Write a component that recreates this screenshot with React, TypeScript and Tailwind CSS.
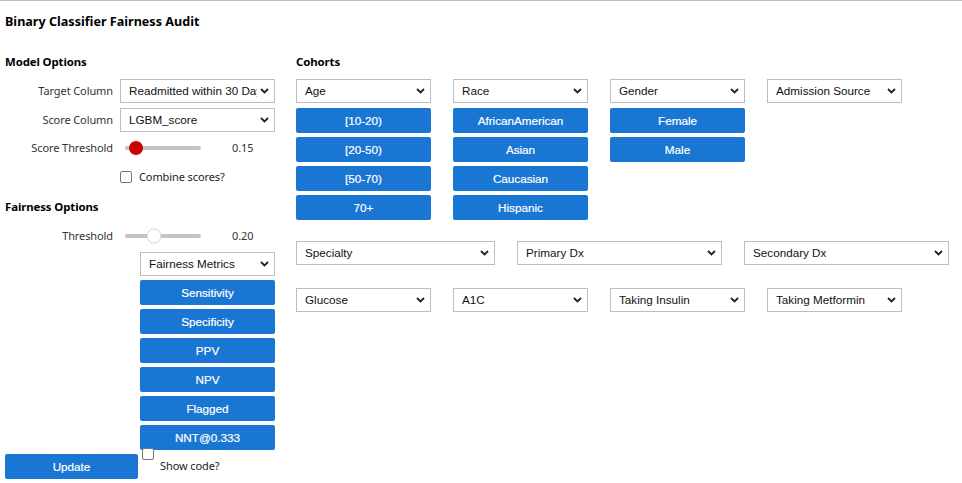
import React from 'react'

const ui = "font-['Noto_Sans','Open_Sans',sans-serif]"
const arial = "font-['Liberation_Sans',Arial,sans-serif]"

function Chevron() {
  return (
    <svg width="9" height="6" viewBox="0 0 9 6" className="shrink-0">
      <path d="M1 1l3.5 3.5L8 1" fill="none" stroke="#222" strokeWidth="1.8" />
    </svg>
  )
}

function Select({ label, className = '' }: { label: string; className?: string }) {
  return (
    <div
      className={`h-[24px] border border-[#bdbdbd] bg-white flex items-center pl-[8px] pr-[5px] gap-[3px] text-[11.7px] tracking-normal text-[#111] ${arial} ${className}`}
    >
      <span className="flex-1 overflow-hidden whitespace-nowrap">{label}</span>
      <Chevron />
    </div>
  )
}

function Btn({ label, className = '' }: { label: string; className?: string }) {
  return (
    <div
      className={`h-[25px] bg-[#1976d2] rounded-[2px] text-white flex items-center justify-center text-[11.7px] tracking-normal [-webkit-text-stroke:0.2px_white] ${arial} ${className}`}
    >
      {label}
    </div>
  )
}

function Slider({ label, value, pos, active }: { label: string; value: string; pos: number; active?: boolean }) {
  return (
    <div className="flex items-center h-[24px]">
      <div className="w-[108px] text-right text-[#333]">{label}</div>
      <div className="ml-[12px] w-[76px] h-[4px] bg-[#c4c4c4] rounded-full relative">
        {active ? (
          <div
            className="absolute top-1/2 w-[14px] h-[14px] rounded-full bg-[#c70000] -translate-x-1/2 -translate-y-1/2"
            style={{ left: pos }}
          />
        ) : (
          <div
            className="absolute top-1/2 w-[15px] h-[15px] rounded-full bg-white border border-[#d6d6d6] -translate-x-1/2 -translate-y-1/2"
            style={{ left: pos }}
          />
        )}
      </div>
      <div className="ml-[31px] text-[#333]">{value}</div>
    </div>
  )
}

function Checkbox({ className = '' }: { className?: string }) {
  return <div className={`w-[12px] h-[12px] border border-[#767676] rounded-[2px] bg-white ${className}`} />
}

const cohorts = [
  { name: 'Age', values: ['[10-20)', '[20-50)', '[50-70)', '70+'] },
  { name: 'Race', values: ['AfricanAmerican', 'Asian', 'Caucasian', 'Hispanic'] },
  { name: 'Gender', values: ['Female', 'Male'] },
  { name: 'Admission Source', values: [] as string[] },
]

const metrics = ['Sensitivity', 'Specificity', 'PPV', 'NPV', 'Flagged', 'NNT@0.333']

export default function App() {
  return (
    <div className={`w-[962px] h-[483px] bg-white border-t border-[#bdbdbd] text-[11px] tracking-[-0.1px] text-black overflow-hidden ${ui}`}>
      <div className="px-[5px] pt-[11px] h-[31px] leading-[20px] text-[12.6px] tracking-normal font-bold">
        Binary Classifier Fairness Audit
      </div>

      <div className="flex mt-[20px]">
        {/* left: model + fairness options */}
        <div className="w-[291px] pl-[5px] flex flex-col">
          <div className="h-[20px] leading-[20px] font-bold text-[11.4px]">Model Options</div>
          <div className="flex items-center mt-[7px]">
            <div className="w-[108px] text-right text-[#333]">Target Column</div>
            <Select label="Readmitted within 30 Days" className="ml-[7px] w-[155px]" />
          </div>
          <div className="flex items-center mt-[5px]">
            <div className="w-[108px] text-right text-[#333]">Score Column</div>
            <Select label="LGBM_score" className="ml-[7px] w-[155px]" />
          </div>
          <div className="mt-[4px]">
            <Slider label="Score Threshold" value="0.15" pos={11} active />
          </div>
          <div className="flex items-center h-[20px] mt-[7px] ml-[115px]">
            <Checkbox />
            <span className="ml-[7px] text-[#222]">Combine scores?</span>
          </div>
          <div className="h-[20px] leading-[20px] font-bold text-[11.4px] mt-[10px]">Fairness Options</div>
          <div className="mt-[7px]">
            <Slider label="Threshold" value="0.20" pos={29} />
          </div>
          <Select label="Fairness Metrics" className="ml-[135px] w-[135px] mt-[4px]" />
          <div className="ml-[135px] w-[135px] flex flex-col gap-[4px] mt-[4px]">
            {metrics.map((m) => (
              <Btn key={m} label={m} />
            ))}
          </div>
        </div>

        {/* right: cohorts */}
        <div className="ml-[5px] flex flex-col">
          <div className="h-[20px] leading-[20px] font-bold text-[11.4px]">Cohorts</div>
          <div className="flex gap-[22px] mt-[7px] h-[141px]">
            {cohorts.map((c) => (
              <div key={c.name} className="w-[135px] flex flex-col gap-[4px]">
                <Select label={c.name} className="mb-[1px]" />
                {c.values.map((v) => (
                  <Btn key={v} label={v} />
                ))}
              </div>
            ))}
          </div>
          <div className="flex gap-[22px] mt-[21px]">
            <Select label="Specialty" className="w-[199px]" />
            <Select label="Primary Dx" className="w-[205px]" />
            <Select label="Secondary Dx" className="w-[205px]" />
          </div>
          <div className="flex gap-[22px] mt-[23px]">
            <Select label="Glucose" className="w-[135px]" />
            <Select label="A1C" className="w-[135px]" />
            <Select label="Taking Insulin" className="w-[135px]" />
            <Select label="Taking Metformin" className="w-[135px]" />
          </div>
        </div>
      </div>

      <div className="flex items-center px-[5px] mt-[4px]">
        <Btn label="Update" className="w-[133px]" />
        <Checkbox className="ml-[4px] self-start -mt-[6px]" />
        <span className="ml-[6px] text-[#222]">Show code?</span>
      </div>
    </div>
  )
}
